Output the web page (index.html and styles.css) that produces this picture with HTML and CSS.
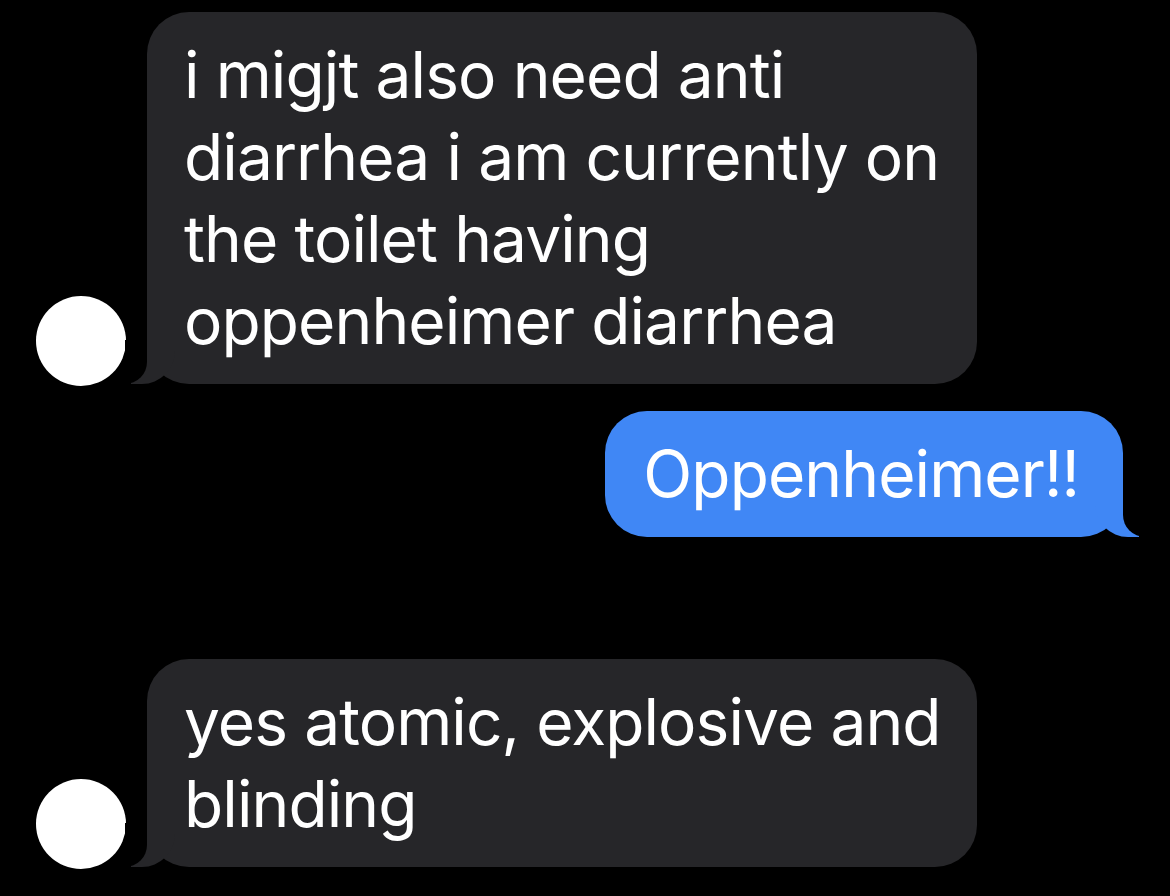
FILE: index.html
```html
<!DOCTYPE html>
<html lang="en">
<head>
    <meta charset="UTF-8">
    <meta name="viewport" content="width=device-width, initial-scale=1.0">
    <title>Messages</title>
    <link rel="stylesheet" href="styles.css">
</head>
<body>
    <div class="thread">
        <div class="row row-in">
            <div class="avatar"></div>
            <div class="bubble bubble-in">i migjt also need anti diarrhea i am currently on the toilet having oppenheimer diarrhea</div>
        </div>

        <div class="row row-out">
            <div class="bubble bubble-out">Oppenheimer!!</div>
        </div>

        <div class="row row-in row-later">
            <div class="avatar"></div>
            <div class="bubble bubble-in">yes atomic, explosive and blinding</div>
        </div>
    </div>
</body>
</html>
```

FILE: styles.css
```css
body {
    margin: 0;
    background-color: #000;
    color: #fff;
    font-family: Inter, "Noto Sans", sans-serif;
}

.thread {
    display: flex;
    flex-direction: column;
    padding: 12px 47px 28px 36px;
}

.row {
    display: flex;
    align-items: flex-end;
}

.row-in {
    gap: 21px;
}

.row-out {
    justify-content: flex-end;
    margin-top: 27px;
}

.row-later {
    margin-top: 122px;
}

.avatar {
    width: 90px;
    height: 90px;
    border-radius: 50%;
    background-color: #fff;
    flex-shrink: 0;
    margin-bottom: -2px;
}

.bubble {
    position: relative;
    box-sizing: border-box;
    max-width: 830px;
    padding: 22px 28px 22px 37px;
    border-radius: 42px;
    font-size: 64px;
    font-weight: 400;
    letter-spacing: -0.9px;
    line-height: 82px;
}

.bubble-in {
    background-color: #262629;
}

.bubble-out {
    background-color: #4087f5;
    padding-left: 38px;
    padding-right: 44px;
}

/* tails */
.bubble::before,
.bubble::after {
    content: "";
    position: absolute;
    bottom: 0;
    height: 44px;
}

.bubble-in::before {
    left: -16px;
    width: 44px;
    background-color: #262629;
    border-bottom-right-radius: 33px;
}

.bubble-in::after {
    left: -22px;
    width: 22px;
    background-color: #000;
    border-bottom-right-radius: 22px;
}

.bubble-out::before {
    right: -16px;
    width: 44px;
    background-color: #4087f5;
    border-bottom-left-radius: 33px;
}

.bubble-out::after {
    right: -22px;
    width: 22px;
    background-color: #000;
    border-bottom-left-radius: 22px;
}
```
